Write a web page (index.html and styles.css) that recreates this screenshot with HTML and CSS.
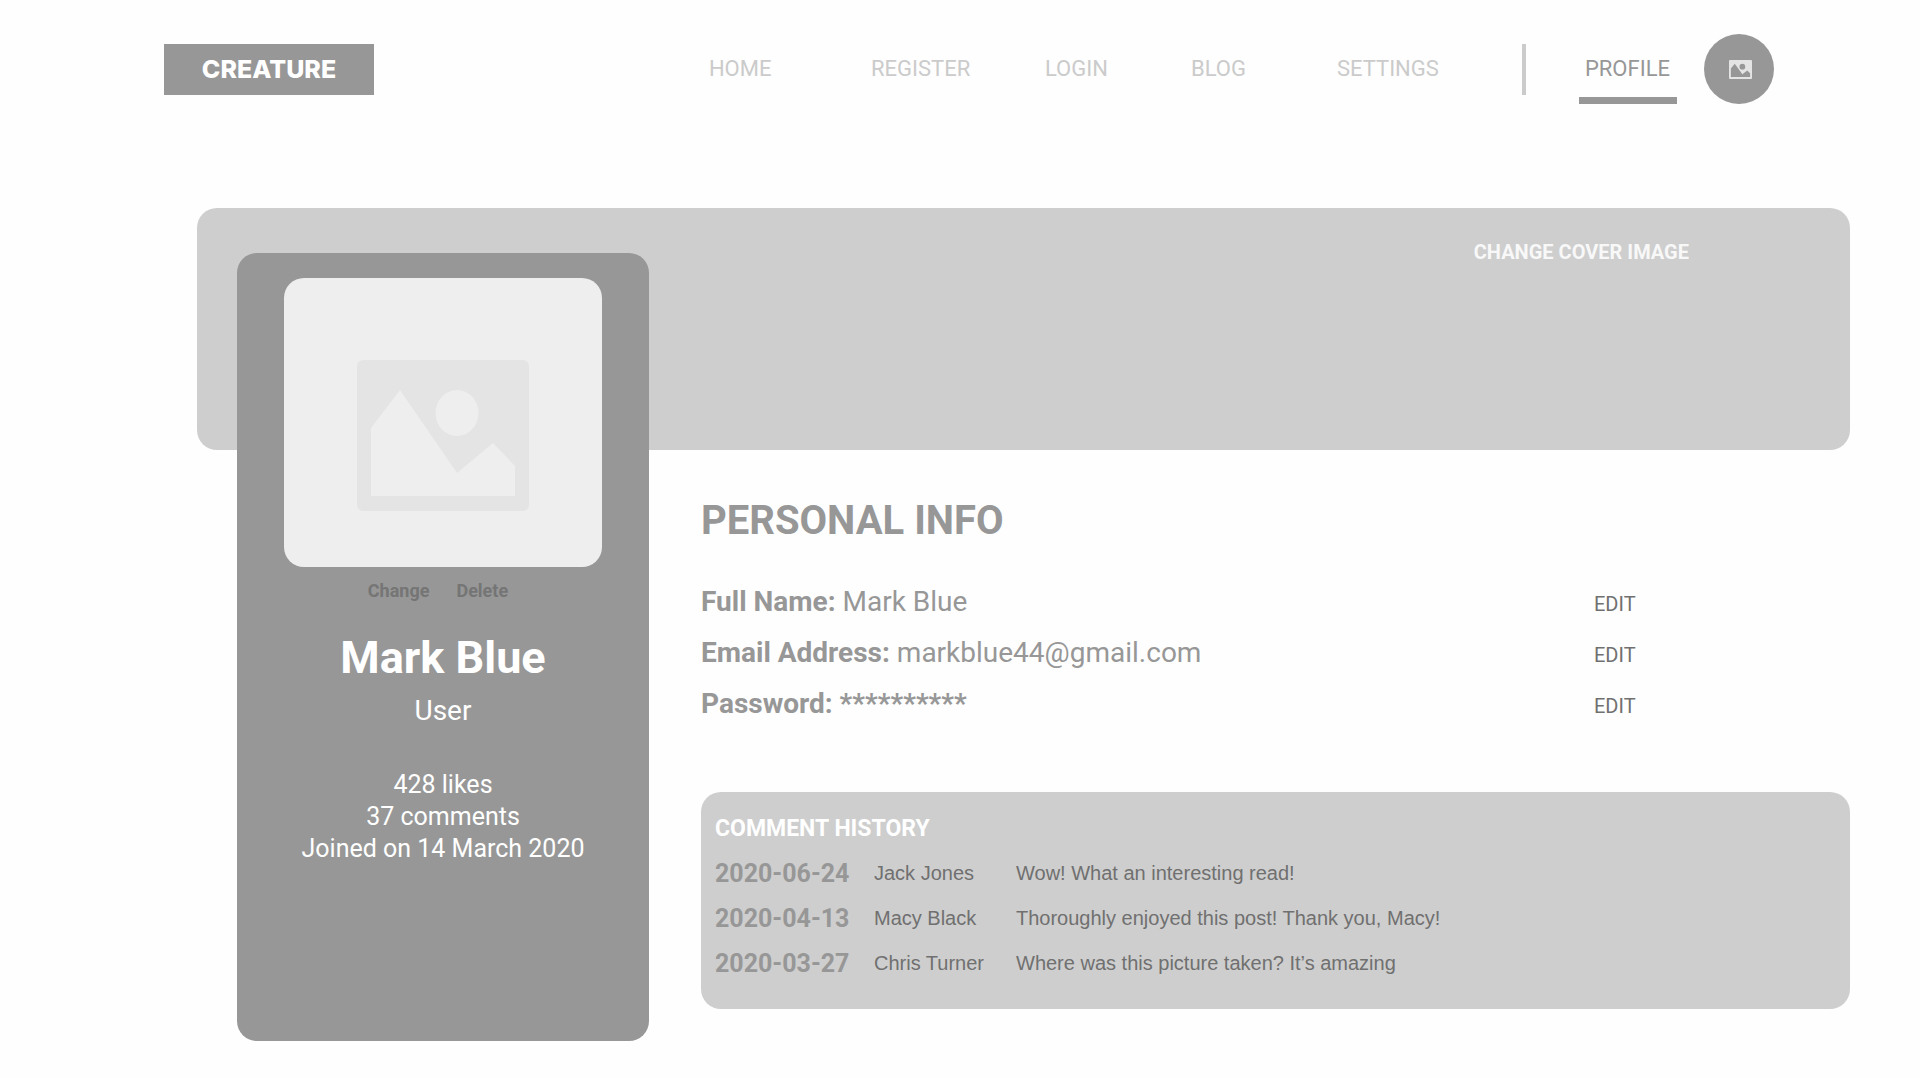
FILE: index.html
```html
<!DOCTYPE html>
<html lang="en">
<head>
  <meta charset="utf-8">
  <meta name="viewport" content="width=device-width, initial-scale=1">
  <title>Creature – Profile</title>
  <link rel="stylesheet" href="styles.css">
</head>
<body>
  <header class="header">
    <a class="logo" href="#">CREATURE</a>
    <nav class="nav" aria-label="Main">
      <a href="#">HOME</a>
      <a href="#">REGISTER</a>
      <a href="#">LOGIN</a>
      <a href="#">BLOG</a>
      <a href="#">SETTINGS</a>
    </nav>
    <div class="account">
      <a class="account-link" href="#" aria-current="page">PROFILE</a>
      <a class="avatar" href="#" aria-label="Your avatar">
        <svg class="avatar-icon" viewBox="0 0 172 151" preserveAspectRatio="none" aria-hidden="true">
          <path fill="currentColor" fill-rule="evenodd" d="M7 0H165Q172 0 172 7V144Q172 151 165 151H7Q0 151 0 144V7Q0 0 7 0ZM14 68V136H158V106L136 83L100 113L43 30ZM100 30A21.500 23 0 1 0 100 76A21.500 23 0 1 0 100 30Z"/>
        </svg>
      </a>
    </div>
  </header>

  <main class="profile">
    <section class="cover" aria-label="Cover image">
      <button class="cover-button" type="button">CHANGE COVER IMAGE</button>
    </section>

    <aside class="card">
      <div class="photo">
        <svg class="photo-icon" viewBox="0 0 172 151" aria-hidden="true">
          <path fill="currentColor" fill-rule="evenodd" d="M7 0H165Q172 0 172 7V144Q172 151 165 151H7Q0 151 0 144V7Q0 0 7 0ZM14 68V136H158V106L136 83L100 113L43 30ZM100 30A21.500 23 0 1 0 100 76A21.500 23 0 1 0 100 30Z"/>
        </svg>
      </div>
      <div class="photo-actions">
        <button type="button">Change</button>
        <button type="button">Delete</button>
      </div>
      <h1 class="name">Mark Blue</h1>
      <p class="role">User</p>
      <ul class="stats">
        <li>428 likes</li>
        <li>37 comments</li>
        <li>Joined on 14 March 2020</li>
      </ul>
    </aside>

    <div class="details">
      <h2 class="details-title">PERSONAL INFO</h2>
      <ul class="info">
        <li><span><b>Full Name:</b> Mark Blue</span><button type="button" aria-label="Edit full name">EDIT</button></li>
        <li><span><b>Email Address:</b> markblue44@gmail.com</span><button type="button" aria-label="Edit email address">EDIT</button></li>
        <li><span><b>Password: **********</b></span><button type="button" aria-label="Edit password">EDIT</button></li>
      </ul>

      <section class="history">
        <h2 class="history-title">COMMENT HISTORY</h2>
        <table class="comments">
          <tbody>
            <tr><th scope="row">2020-06-24</th><td class="author">Jack Jones</td><td>Wow! What an interesting read!</td></tr>
            <tr><th scope="row">2020-04-13</th><td class="author">Macy Black</td><td>Thoroughly enjoyed this post! Thank you, Macy!</td></tr>
            <tr><th scope="row">2020-03-27</th><td class="author">Chris Turner</td><td>Where was this picture taken? It’s amazing</td></tr>
          </tbody>
        </table>
      </section>
    </div>
  </main>
</body>
</html>
```
FILE: styles.css
```css
:root {
  --dark: #979797;
  --mid: #cecece;
  --light: #eeeeee;
  --ink: #707070;
  --radius: 20px;
}

* {
  box-sizing: border-box;
}

body {
  margin: 0;
  background: #fefefe;
  color: var(--dark);
  font-family: Roboto, "Liberation Sans", sans-serif;
}

h1, h2, p, ul {
  margin: 0;
  padding: 0;
}

ul {
  list-style: none;
}

a {
  color: inherit;
  text-decoration: none;
}

button {
  padding: 0;
  border: 0;
  background: none;
  color: inherit;
  font: inherit;
  cursor: pointer;
}

/* Header */

.header {
  display: flex;
  align-items: center;
  padding: 34px 146px 0 164px;
}

.logo {
  width: 210px;
  background: var(--dark);
  color: #fff;
  font: 800 25px/51px Inter, "Open Sans", sans-serif;
  text-align: center;
}

.nav {
  display: grid;
  grid-template-columns: 162px 174px 146px 146px 185px;
  margin-left: auto;
  color: #cbcbcb;
  font-size: 22px;
  line-height: 70px;
}

.account {
  display: flex;
  align-items: center;
  gap: 27px;
}

.account::before {
  content: "";
  width: 4px;
  height: 51px;
  margin-right: 26px;
  background: #cbcbcb;
}

.account-link {
  height: 70px;
  padding: 7px 7px 0 6px;
  border-bottom: 7px solid var(--dark);
  font-size: 22px;
  line-height: 56px;
}

.avatar {
  display: grid;
  place-items: center;
  width: 70px;
  height: 70px;
  padding-left: 2px;
  border-radius: 50%;
  background: var(--dark);
  color: #e4e4e4;
}

.avatar-icon {
  width: 23px;
  height: 19px;
}

/* Profile: the card overlaps the lower part of the cover */

.profile {
  display: grid;
  grid-template-columns: 40px 412px 52px 1fr;
  grid-template-rows: 45px 197px auto;
  padding: 104px 70px 37px 197px;
}

.cover {
  grid-area: 1 / 1 / 3 / -1;
  display: flex;
  justify-content: flex-end;
  align-items: flex-start;
  padding: 32px 161px;
  border-radius: var(--radius);
  background: var(--mid);
}

.cover-button {
  color: #f8f8f8;
  font-size: 20px;
  font-weight: 700;
  line-height: 24px;
}

.card {
  grid-area: 2 / 2 / 4 / 3;
  padding: 25px 47px 176px;
  border-radius: var(--radius);
  background: var(--dark);
  color: #fff;
  text-align: center;
}

.photo {
  display: grid;
  place-items: center;
  height: 289px;
  padding-top: 26px;
  border-radius: var(--radius);
  background: var(--light);
  color: #e4e4e4;
}

.photo-icon {
  width: 172px;
  height: 151px;
}

.photo-actions {
  display: flex;
  justify-content: center;
  gap: 27px;
  margin: 12px 0 28px;
  padding-right: 10px;
  color: #757575;
  font-size: 18px;
  font-weight: 700;
  line-height: 24px;
}

.name {
  font-size: 45px;
  line-height: 54px;
}

.role {
  margin: 10px 0 42px;
  font-size: 28px;
  line-height: 32px;
}

.stats {
  font-size: 25px;
  line-height: 32px;
}

.details {
  grid-area: 3 / 4;
  padding-top: 47px;
}

.details-title {
  font-size: 40px;
  line-height: 48px;
}

.info {
  margin: 31px 0 63px;
  font-size: 28px;
  line-height: 51px;
}

.info li {
  display: grid;
  grid-template-columns: 1fr 256px;
  align-items: baseline;
  justify-items: start;
}

.info button {
  color: var(--ink);
  font-size: 20px;
  line-height: 24px;
}

.history {
  padding: 23px 14px;
  border-radius: var(--radius);
  background: var(--mid);
}

.history-title {
  margin-bottom: 8px;
  color: #fff;
  font-size: 23px;
  line-height: 28px;
}

.comments {
  width: 100%;
  border-collapse: collapse;
  table-layout: fixed;
  color: var(--ink);
  font: 20px/45px "Liberation Sans", sans-serif;
}

.comments th,
.comments td {
  padding: 0;
  text-align: left;
}

.comments th {
  width: 159px;
  color: var(--dark);
  font: 700 25px/45px Roboto, sans-serif;
}

.comments .author {
  width: 142px;
}
```
